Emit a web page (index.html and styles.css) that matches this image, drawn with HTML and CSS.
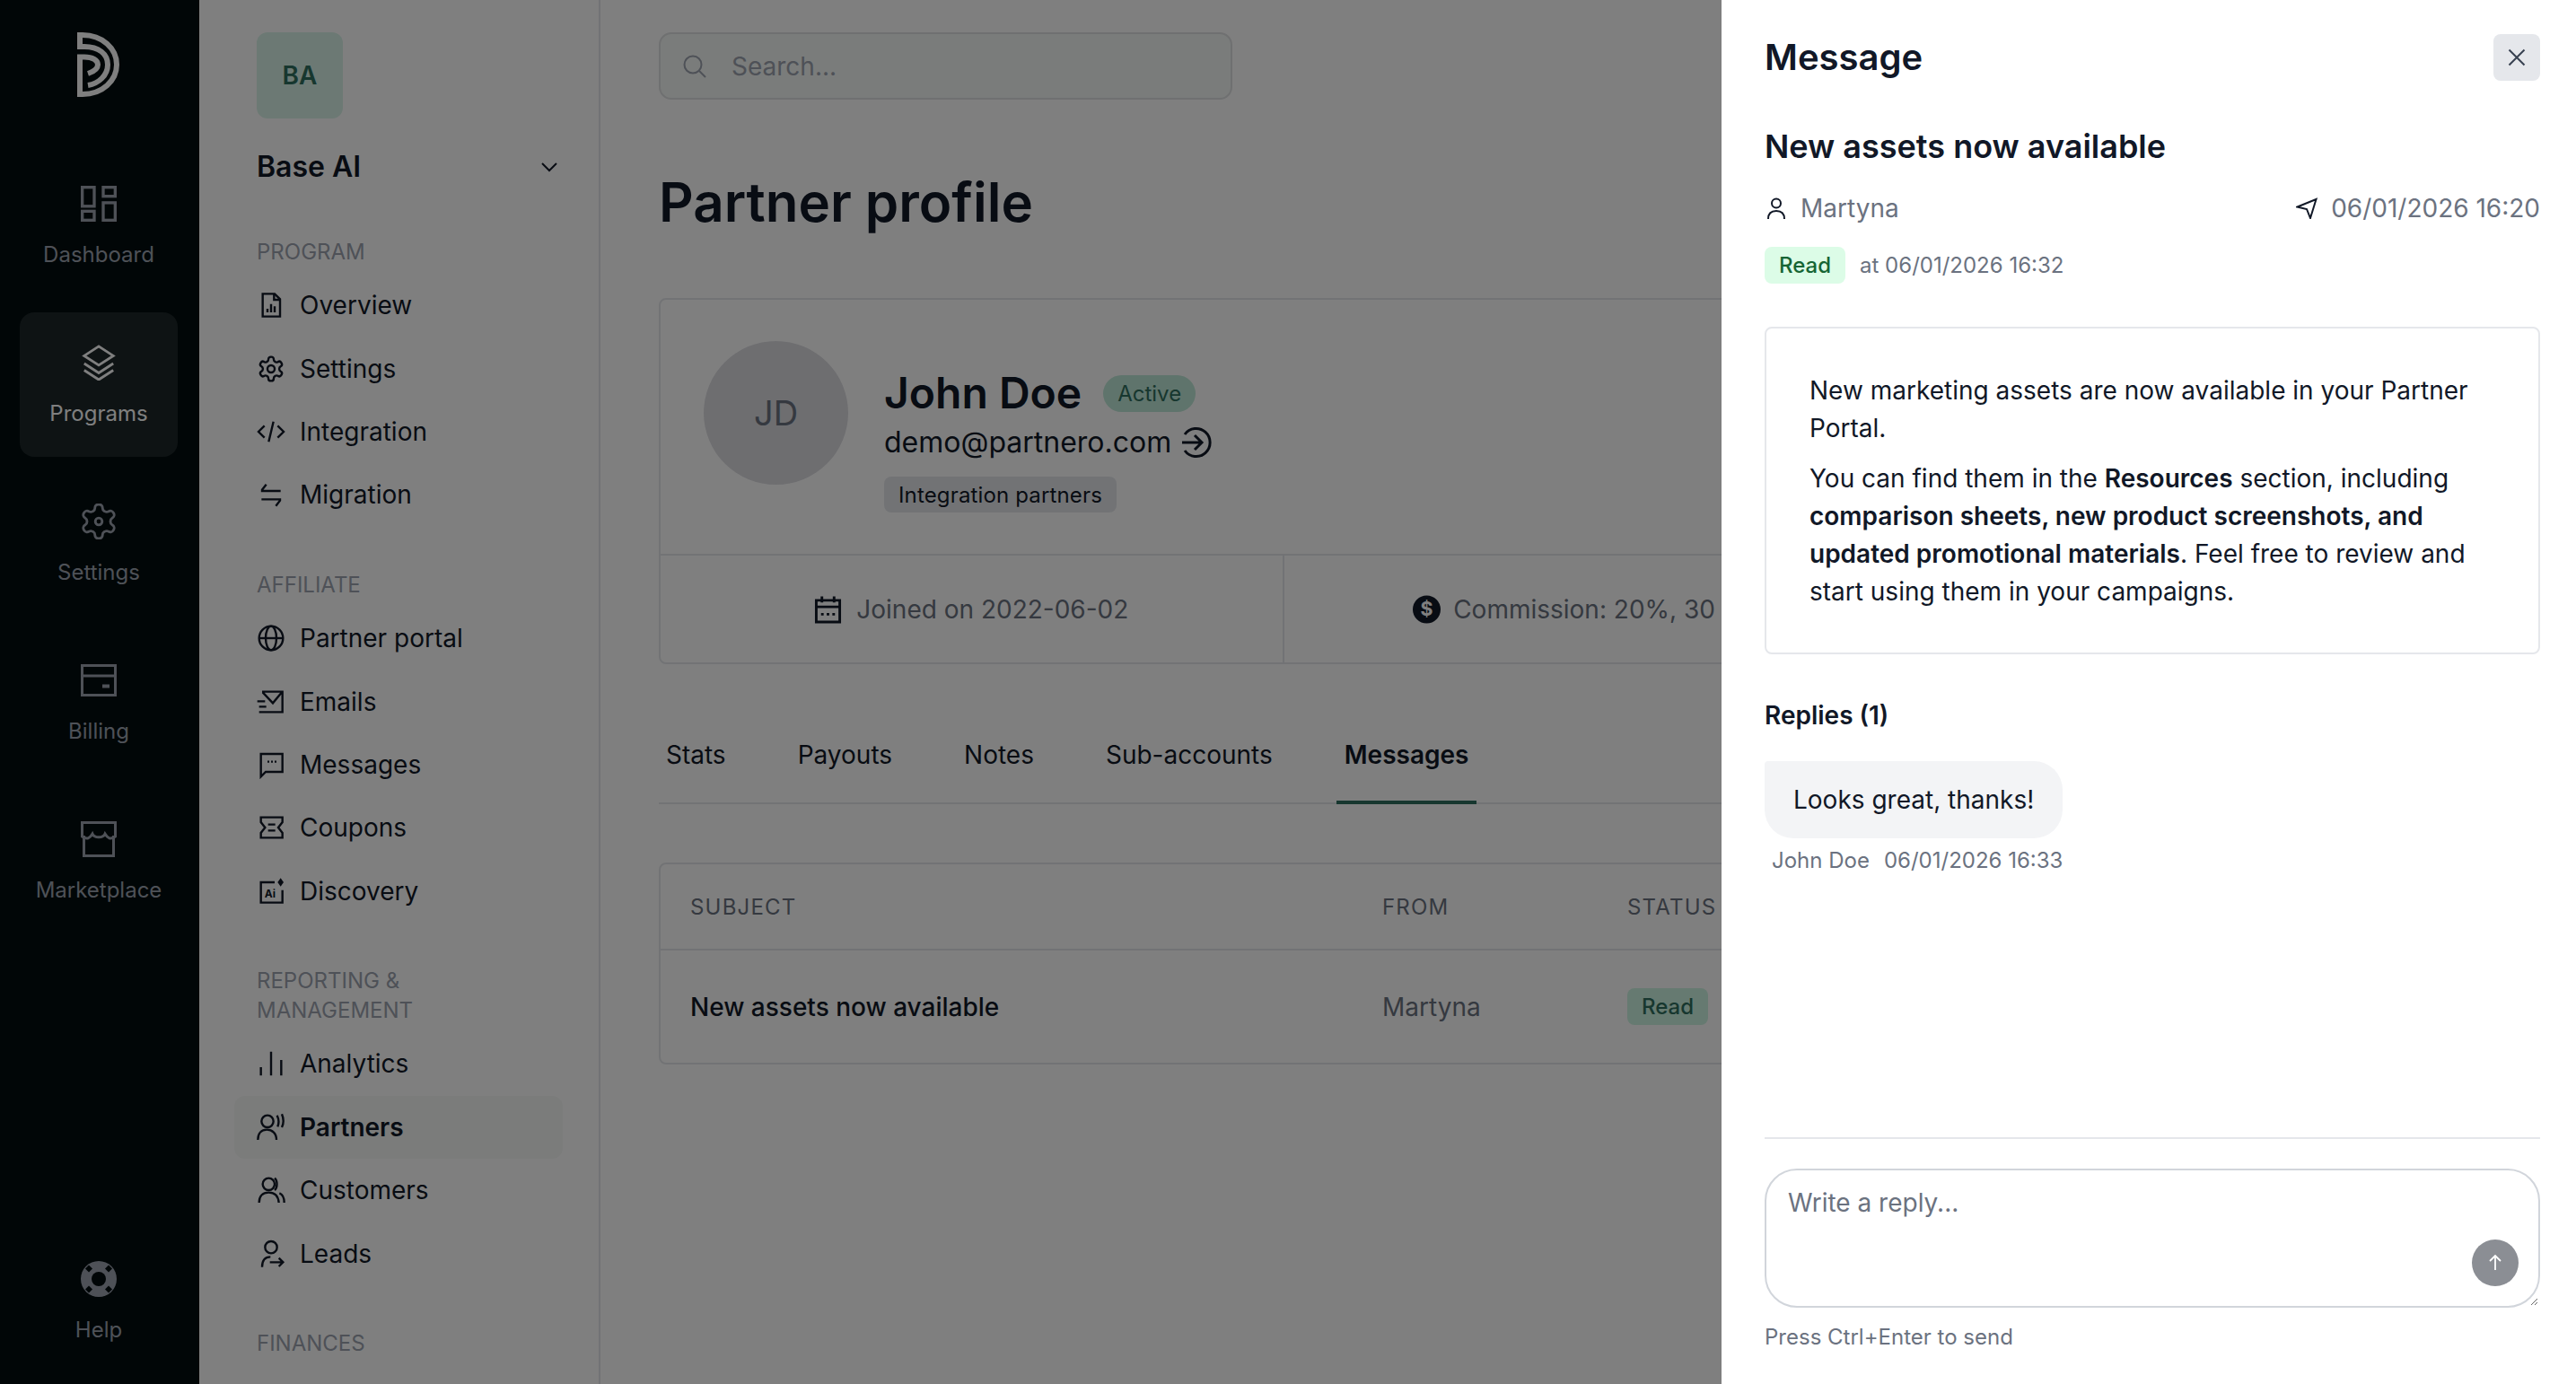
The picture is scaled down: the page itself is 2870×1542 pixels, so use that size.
FILE: index.html
```html
<!DOCTYPE html>
<html lang="en">
<head>
<meta charset="utf-8">
<title>Partner profile</title>
<link rel="stylesheet" href="styles.css">
</head>
<body>
<div class="app">
  <nav class="rail">
    <svg class="logo" viewBox="0 0 48 72" fill="none" stroke="currentColor" stroke-width="6"><path d="M0 3H6C28 3 44 18 44 36S28 69 6 69H3V27"/><path d="M3 3V16H8C24 16 34 24 34 36S24 57 12 59"/><path d="M0 27.500H8C17 27.500 23 31 23 36S18 44 12 46"/></svg>
    <a class="rail-item"><svg class="ri" viewBox="0 0 36 36" fill="none" stroke="currentColor" stroke-width="3"><rect x="1.500" y="1.500" width="12" height="19"/><rect x="22.500" y="1.500" width="12" height="9"/><rect x="1.500" y="25.500" width="12" height="9"/><rect x="22.500" y="17" width="12" height="17.500"/></svg><span>Dashboard</span></a>
    <a class="rail-item active"><svg class="ri" viewBox="0 0 38 42" fill="none" stroke="currentColor" stroke-width="3"><path d="M19 2 36 13 19 24 2 13z"/><path d="M2 22l17 11 17-11"/><path d="M2 30l17 11 17-11"/></svg><span>Programs</span></a>
    <a class="rail-item"><svg class="ri" viewBox="1.500 1.500 21 21" fill="none" stroke="currentColor" stroke-width="1.500"><path d="M12.220 2h-.44a2 2 0 0 0-2 2v.18a2 2 0 0 1-1 1.730l-.43.25a2 2 0 0 1-2 0l-.15-.08a2 2 0 0 0-2.730.73l-.22.38a2 2 0 0 0 .73 2.730l.15.1a2 2 0 0 1 1 1.720v.51a2 2 0 0 1-1 1.740l-.15.09a2 2 0 0 0-.73 2.730l.22.38a2 2 0 0 0 2.730.73l.15-.08a2 2 0 0 1 2 0l.43.25a2 2 0 0 1 1 1.730V20a2 2 0 0 0 2 2h.44a2 2 0 0 0 2-2v-.18a2 2 0 0 1 1-1.730l.43-.25a2 2 0 0 1 2 0l.15.08a2 2 0 0 0 2.730-.73l.22-.39a2 2 0 0 0-.73-2.730l-.15-.08a2 2 0 0 1-1-1.740v-.5a2 2 0 0 1 1-1.740l.15-.09a2 2 0 0 0 .73-2.730l-.22-.38a2 2 0 0 0-2.730-.73l-.15.08a2 2 0 0 1-2 0l-.43-.25a2 2 0 0 1-1-1.730V4a2 2 0 0 0-2-2z"/><circle cx="12" cy="12" r="2"/></svg><span>Settings</span></a>
    <a class="rail-item"><svg class="ri" viewBox="0 0 40 36" fill="none" stroke="currentColor" stroke-width="3"><rect x="1.500" y="1.500" width="37" height="33"/><path d="M2 13h36"/><path d="M24 24.500h8" stroke-width="4"/></svg><span>Billing</span></a>
    <a class="rail-item"><svg class="ri" viewBox="0 0 40 40" fill="none" stroke="currentColor" stroke-width="3"><path d="M3.500 16V38.500H36.500V16"/><path d="M1.500 1.500H38.500V17C33 21 30 19 27 14 25 19 15 19 13 14 10 19 7 21 1.500 17z"/></svg><span>Marketplace</span></a>
    <a class="rail-item help"><svg class="ri" viewBox="0 0 40 40"><circle cx="20" cy="20" r="20" fill="currentColor"/><circle cx="20" cy="20" r="8" fill="#020c0e"/><path d="M9 4.500l4 4-4 4-4-4zM31 4.500l4 4-4 4-4-4zM9 27.500l4 4-4 4-4-4zM31 27.500l4 4-4 4-4-4z" fill="#020c0e"/></svg><span>Help</span></a>
  </nav>

  <aside class="side">
    <div class="org-avatar">BA</div>
    <div class="org-row"><span>Base AI</span><svg class="chev" viewBox="0 0 18 11" fill="none" stroke="currentColor" stroke-width="2"><path d="M1 1l8 8 8-8"/></svg></div>

    <div class="group">
      <div class="group-label">PROGRAM</div>
      <a class="nav"><svg viewBox="0 0 24 24"><path d="M5 2.500h10l4.500 4.500v14.500H5z"/><path d="M14.500 2.500V7.500h5"/><path d="M9 18v-3M12 18v-7M15 18v-5"/></svg>Overview</a>
      <a class="nav"><svg viewBox="0 0 24 24"><path d="M12.220 2h-.44a2 2 0 0 0-2 2v.18a2 2 0 0 1-1 1.730l-.43.25a2 2 0 0 1-2 0l-.15-.08a2 2 0 0 0-2.730.73l-.22.38a2 2 0 0 0 .73 2.730l.15.1a2 2 0 0 1 1 1.720v.51a2 2 0 0 1-1 1.740l-.15.09a2 2 0 0 0-.73 2.730l.22.38a2 2 0 0 0 2.730.73l.15-.08a2 2 0 0 1 2 0l.43.25a2 2 0 0 1 1 1.730V20a2 2 0 0 0 2 2h.44a2 2 0 0 0 2-2v-.18a2 2 0 0 1 1-1.730l.43-.25a2 2 0 0 1 2 0l.15.08a2 2 0 0 0 2.730-.73l.22-.39a2 2 0 0 0-.73-2.730l-.15-.08a2 2 0 0 1-1-1.740v-.5a2 2 0 0 1 1-1.740l.15-.09a2 2 0 0 0 .73-2.730l-.22-.38a2 2 0 0 0-2.730-.73l-.15.08a2 2 0 0 1-2 0l-.43-.25a2 2 0 0 1-1-1.730V4a2 2 0 0 0-2-2z"/><circle cx="12" cy="12" r="3"/></svg>Settings</a>
      <a class="nav"><svg viewBox="0 0 24 24"><path d="M6.500 7l-5 5 5 5M17.500 7l5 5-5 5M14 3.500l-4 17"/></svg>Integration</a>
      <a class="nav"><svg viewBox="0 0 24 24"><path d="M20 9H4.500V8L8 3.500M4 16H19.500V17L16 21.500"/></svg>Migration</a>
    </div>

    <div class="group">
      <div class="group-label">AFFILIATE</div>
      <a class="nav"><svg viewBox="0 0 24 24"><circle cx="12" cy="12" r="10"/><ellipse cx="12" cy="12" rx="4.500" ry="10"/><path d="M2 12h20"/></svg>Partner portal</a>
      <a class="nav"><svg viewBox="0 0 24 24"><path d="M4.500 3.500h17v17H2M5 4l8.500 9L21 4M.5 11.500H7M2 16h6"/></svg>Emails</a>
      <a class="nav"><svg viewBox="0 0 24 24"><path d="M3.500 3H21.500V18H7.500L3.500 22z"/><path d="M9 9.500h1.500M12 9.500h1.500M15 9.500h1.500"/></svg>Messages</a>
      <a class="nav"><svg viewBox="0 0 24 24"><path d="M3.500 3.500H21.500V7.500L18 12l3.500 4.500V20.500H3.500V16.500L7 12 3.500 7.500z"/><path d="M9.500 9.500h6M9.500 14.500h6"/></svg>Coupons</a>
      <a class="nav"><svg viewBox="0 0 24 24"><path d="M21.500 11V21.500H3.500V4.500H15"/><path class="solid" d="M20 1l2.500 3.500L20 8l-2.500-3.500z"/><text class="ai" x="6.500" y="17">Ai</text></svg>Discovery</a>
    </div>

    <div class="group">
      <div class="group-label">REPORTING &amp;<br>MANAGEMENT</div>
      <a class="nav"><svg viewBox="0 0 24 24"><path d="M3.500 22v-7M12 22V2M20.500 22V9"/></svg>Analytics</a>
      <a class="nav current"><svg viewBox="0 0 24 24"><circle cx="9" cy="7" r="5"/><path d="M1 22.500C1 17 4 14 8.500 14s8 3 8 8.500"/><path d="M17 2c1.500 3 1.500 7 .5 9.500M21 1c1.500 3.500 1.500 8 0 11"/></svg>Partners</a>
      <a class="nav"><svg viewBox="0 0 24 24"><circle cx="10" cy="7" r="5"/><path d="M2 22.500C2 17 5 14 10 14s8 3 8.500 8.500M15 2c2.500 2 2.500 8 0 10M19 14.500c2.500 1 4 4 4 8"/></svg>Customers</a>
      <a class="nav"><svg viewBox="0 0 24 24"><circle cx="12" cy="6.500" r="5"/><path d="M4.500 23c0-6 3-8.500 7-8.500M11 19H22M18.500 15.500l3.500 3.500-3.500 3.500"/></svg>Leads</a>
    </div>

    <div class="group"><div class="group-label">FINANCES</div></div>
  </aside>

  <main class="main">
    <div class="search"><svg viewBox="0 0 28 28" fill="none" stroke="currentColor" stroke-width="2"><circle cx="12" cy="12" r="9.500"/><path d="M19 19l7 7"/></svg><span>Search...</span></div>
    <h1 class="title">Partner profile</h1>

    <section class="card">
      <div class="profile">
        <div class="avatar">JD</div>
        <div class="who">
          <div class="name-row"><span class="name">John Doe</span><span class="pill">Active</span></div>
          <div class="email">demo@partnero.com<svg viewBox="0 0 36 36" fill="none" stroke="currentColor" stroke-width="3"><path d="M5 9a15.500 15.500 0 1 1 0 18M2 18h22M16 10l8 8-8 8"/></svg></div>
          <span class="tag">Integration partners</span>
        </div>
      </div>
      <div class="facts">
        <div class="fact"><svg viewBox="0 0 32 32" fill="none" stroke="currentColor" stroke-width="3"><path d="M2.500 5.500h27v25h-27zM2.500 13h27M9 1v7M23 1v7"/><path d="M8 21.500h3M14.500 21.500h3M21 21.500h3"/></svg>Joined on 2022-06-02</div>
        <div class="fact"><svg viewBox="0 0 32 32"><circle cx="16" cy="16" r="16" fill="currentColor"/><text class="dollar" x="16" y="23">$</text></svg>Commission: 20%, 30 days</div>
        <div class="fact"></div>
      </div>
    </section>

    <div class="tabs">
      <a class="tab">Stats</a><a class="tab">Payouts</a><a class="tab">Notes</a><a class="tab">Sub-accounts</a><a class="tab on">Messages</a>
    </div>

    <section class="card table">
      <div class="row head"><span>SUBJECT</span><span>FROM</span><span>STATUS</span></div>
      <div class="row body"><span class="subject">New assets now available</span><span class="from">Martyna</span><span><b class="read dim">Read</b></span></div>
    </section>
  </main>
</div>

<div class="scrim"></div>

<aside class="drawer">
  <header class="d-head">
    <h2>Message</h2>
    <button class="close" type="button"><svg viewBox="0 0 20 20" fill="none" stroke="currentColor" stroke-width="2"><path d="M1.500 1.500l17 17M18.500 1.500l-17 17"/></svg></button>
  </header>
  <h3 class="d-subject">New assets now available</h3>
  <div class="d-meta">
    <span class="mi"><svg class="m-user" viewBox="0 0 20 24" fill="none" stroke="currentColor" stroke-width="2"><circle cx="10" cy="6.500" r="5"/><path d="M1 24c0-6 3.500-9 9-9s9 3 9 9"/></svg>Martyna</span>
    <span class="mi"><svg class="m-send" viewBox="0 0 24 24" fill="none" stroke="currentColor" stroke-width="2"><path d="M22.500 2 1.500 10.500 12 13l4 10z"/></svg>06/01/2026 16:20</span>
  </div>
  <div class="d-read"><b class="read">Read</b><span>at 06/01/2026 16:32</span></div>
  <div class="d-body">
    <p>New marketing assets are now available in your Partner Portal.</p>
    <p>You can find them in the <strong>Resources</strong> section, including <strong>comparison sheets, new product screenshots, and updated promotional materials</strong>. Feel free to review and start using them in your campaigns.</p>
  </div>
  <div class="d-replies">Replies (1)</div>
  <div class="bubble">Looks great, thanks!</div>
  <div class="b-meta"><span>John Doe</span><span>06/01/2026 16:33</span></div>
  <footer class="d-foot">
    <div class="composer">
      <textarea placeholder="Write a reply..."></textarea>
      <button class="send" type="button"><svg viewBox="0 0 20 20" fill="none" stroke="currentColor" stroke-width="1.800"><path d="M10 18V2M4 8l6-6 6 6"/></svg></button>
    </div>
    <div class="hint">Press Ctrl+Enter to send</div>
  </footer>
</aside>
</body>
</html>
```

FILE: styles.css
```css
* { box-sizing: border-box; }
html, body { margin: 0; height: 100%; overflow: hidden; }
body { font-family: Inter, "Noto Sans", sans-serif; font-size: 28px; color: #111827; background: #fff; }
h1, h2, h3, p { margin: 0; }

.app { display: flex; height: 1542px; overflow: hidden; }

/* rail */
.rail { width: 221px; flex: none; background: #020c0e; color: #9ca3af; display: flex; flex-direction: column; align-items: center; padding: 36px 23px 12px 22px; box-shadow: 1px 0 0 #020c0e; }
.logo { width: 48px; height: 72px; color: #fff; flex: none; margin-bottom: 63px; }
.rail-item { width: 176px; height: 161px; flex: none; border-radius: 16px; margin-bottom: 16px; position: relative; display: flex; flex-direction: column; align-items: center; font-size: 24px; line-height: 34px; }
.rail-item span { position: absolute; top: 96px; white-space: nowrap; }
.rail-item.active { background: #1c2628; color: #fff; }
.ri { width: 40px; height: 40px; margin-top: 36px; }
.help { margin-top: auto; margin-bottom: 0; }

/* sidebar */
.side { width: 448px; flex: none; border-right: 2px solid #e5e7eb; padding: 36px 40px 0; overflow: hidden; }
.org-avatar { margin-left: 25px; width: 96px; height: 96px; border-radius: 12px; background: #d8f3e8; color: #2f6f5e; font-weight: 600; font-size: 28px; display: flex; align-items: center; justify-content: center; }
.org-row { margin: 30px 6px 0 25px; display: flex; align-items: center; justify-content: space-between; font-size: 32px; line-height: 48px; font-weight: 600; }
.chev { width: 18px; height: 11px; }
.group { margin-top: 48.400px; }
.org-row + .group { margin-top: 54px; }
.group-label { margin: 0 0 8px 25px; font-size: 24px; line-height: 33px; color: #9ca3af; }
.nav { height: 70.400px; display: flex; align-items: center; padding-left: 25px; border-radius: 12px; gap: 16px; }
.nav svg { width: 32px; height: 32px; flex: none; fill: none; stroke: currentColor; stroke-width: 1.800; }
.nav .solid { fill: currentColor; stroke: none; }
.nav .ai { font-family: Inter, sans-serif; font-size: 9px; font-weight: 700; stroke: none; fill: currentColor; }
.nav.current { background: #f6f8f7; font-weight: 600; }

/* main */
.main { flex: 1; min-width: 0; padding: 36px 48px 0 65px; }
.search { width: 639px; height: 75px; border: 2px solid #dfe1e2; border-radius: 14px; background: #f5f8f6; display: flex; align-items: center; color: #9ca3af; padding-left: 24px; gap: 27px; }
.search svg { width: 28px; height: 28px; }
.title { margin-top: 78px; font-size: 60px; line-height: 72px; font-weight: 600; }
.card { border: 2px solid #e5e7eb; border-radius: 8px; }
.main > .card:first-of-type { margin-top: 71px; }
.profile { display: flex; padding: 46px 48px; gap: 40px; border-bottom: 2px solid #e5e7eb; }
.avatar { width: 161px; height: 160px; border-radius: 50%; background: #dcdce1; color: #6b7280; font-size: 38px; display: flex; align-items: center; justify-content: center; flex: none; }
.who { padding-top: 28px; display: flex; flex-direction: column; align-items: flex-start; }
.name-row { display: flex; align-items: center; gap: 24px; height: 60px; }
.name { font-size: 48px; font-weight: 600; line-height: 60px; }
.pill { height: 41px; padding: 0 16px; border-radius: 21px; background: #bfe8d8; color: #2f6f5e; font-size: 24px; display: flex; align-items: center; }
.email { margin-top: 3px; font-size: 32px; line-height: 44px; display: flex; align-items: center; gap: 10px; }
.email svg { width: 36px; height: 36px; }
.tag { margin-top: 16px; height: 40px; padding: 0 16px; border-radius: 8px; background: #e5e7eb; font-size: 24px; letter-spacing: .15px; display: flex; align-items: center; }
.facts { display: grid; grid-template-columns: repeat(3, 1fr); height: 119px; }
.fact { display: flex; align-items: center; justify-content: center; gap: 16px; color: #6b7280; }
.fact:first-child { border-right: 2px solid #e5e7eb; }
.fact:nth-child(2) { gap: 14px; }
.fact svg { width: 31px; height: 32px; color: #111827; flex: none; }
.dollar { font-family: Inter, sans-serif; font-size: 22px; font-weight: 700; fill: #fff; text-anchor: middle; }

.tabs { margin-top: 80px; display: flex; gap: 64px; border-bottom: 2px solid #e5e7eb; }
.tab { padding: 0 8px 30px; line-height: 42px; border-bottom: 4px solid transparent; margin-bottom: -2px; }
.tab.on { font-weight: 600; border-bottom-color: #2f6f5e; padding: 0 9px 30px; margin-left: -1px; margin-right: -1px; }

.table { margin-top: 65px; }
.row { display: grid; grid-template-columns: 771px 273px 1fr; padding-left: 33px; align-items: center; }
.head { height: 96px; border-bottom: 2px solid #e5e7eb; font-size: 24px; letter-spacing: 1.200px; color: #6b7280; }
.row.body { height: 125px; }
.subject { font-weight: 500; }
.from { color: #6b7280; }
.read { display: inline-flex; align-items: center; height: 41px; padding: 0 16px; border-radius: 8px; background: #dcfce7; color: #166534; font-size: 24px; font-weight: 500; }
.read.dim { background: #cdf5e2; color: #2f6f5e; }

/* overlay + drawer */
.scrim { position: fixed; inset: 0; background: rgba(0, 0, 0, .5); }
.drawer { position: fixed; top: 0; right: 0; bottom: 0; width: 952px; background: #fff; padding: 38px 40px 0 48px; display: flex; flex-direction: column; }
.d-head { display: flex; justify-content: space-between; align-items: center; height: 52px; }
.d-head h2 { font-size: 40px; font-weight: 600; line-height: 52px; }
.close { width: 52px; height: 52px; border: 0; padding: 0; border-radius: 8px; background: #e5e7eb; color: #374151; display: flex; align-items: center; justify-content: center; }
.close svg { width: 20px; height: 20px; }
.d-subject { margin-top: 49px; font-size: 36px; line-height: 48px; font-weight: 600; }
.d-meta { margin-top: 24px; display: flex; justify-content: space-between; line-height: 42px; color: #6b7280; }
.mi { display: flex; align-items: center; }
.mi svg { color: #111827; flex: none; }
.m-user { width: 20px; height: 24px; margin: 0 17px 0 3px; }
.m-send { width: 24px; height: 24px; margin-right: 15px; }
.d-read { margin-top: 22px; display: flex; align-items: center; gap: 16px; font-size: 24px; color: #6b7280; }
.d-body { margin-top: 48px; border: 2px solid #e5e7eb; border-radius: 8px; padding: 48px 48px 47px; line-height: 42px; }
.d-body p + p { margin-top: 14px; }
.d-body strong { font-weight: 600; }
.d-replies { margin-top: 48px; font-weight: 600; line-height: 40px; }
.bubble { margin-top: 31px; align-self: flex-start; padding: 22px 32px; line-height: 42px; background: #f3f4f6; border-radius: 4px 32px 32px 32px; }
.b-meta { margin: 8px 0 0 8px; font-size: 24px; line-height: 33px; color: #6b7280; display: flex; gap: 16px; }
.d-foot { margin-top: auto; padding-bottom: 36px; }
.composer { position: relative; border-top: 2px solid #e5e7eb; padding-top: 33px; }
.composer textarea { display: block; width: 100%; height: 155px; border: 2px solid #d1d5db; border-radius: 36px; padding: 16px 24px; font: inherit; line-height: 40px; color: #111827; outline: none; background: #fff; }
.composer textarea::placeholder { color: #6b7280; opacity: 1; }
.send { position: absolute; right: 24px; bottom: 24px; width: 52px; height: 52px; border: 0; padding: 0; border-radius: 50%; background: #8b8e94; color: #fff; display: flex; align-items: center; justify-content: center; }
.send svg { width: 20px; height: 20px; }
.hint { margin-top: 16px; font-size: 24px; line-height: 33px; color: #6b7280; }
```
